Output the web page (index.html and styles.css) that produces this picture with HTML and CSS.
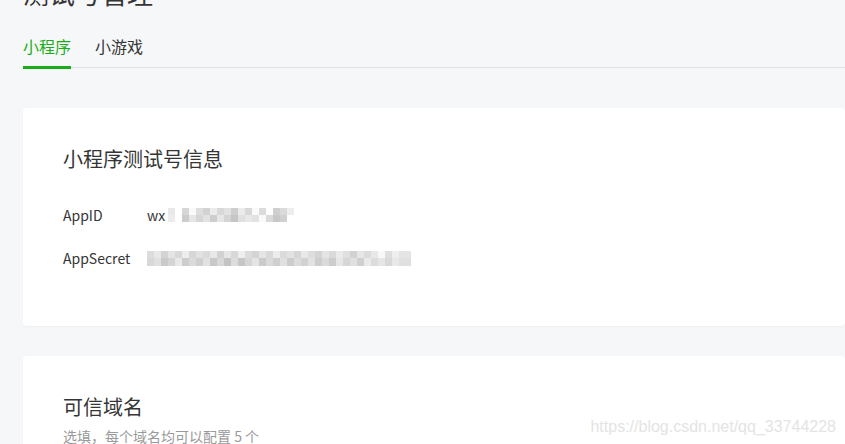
FILE: index.html
```html
<!DOCTYPE html>
<html lang="zh-CN">
<head>
  <meta charset="UTF-8" />
  <meta name="viewport" content="width=device-width, initial-scale=1.0" />
  <title>测试号管理</title>
  <link rel="stylesheet" href="styles.css">
</head>
<body>
  <div class="page">
    <h2 class="page-title">测试号管理</h2>

    <div class="tabs">
      <span class="tab active">小程序</span>
      <span class="tab">小游戏</span>
    </div>

    <div class="card">
      <h3 class="card-title">小程序测试号信息</h3>
      <div class="info-row">
        <span class="info-label">AppID</span>
        <span class="info-value">wx<span class="mosaic mosaic-id"></span></span>
      </div>
      <div class="info-row">
        <span class="info-label">AppSecret</span>
        <span class="info-value"><span class="mosaic mosaic-secret"></span></span>
      </div>
    </div>

    <div class="card card-domain">
      <h3 class="card-title">可信域名</h3>
      <p class="card-desc">选填，每个域名均可以配置 5 个</p>
    </div>
  </div>

  <div class="watermark">https://blog.csdn.net/qq_33744228</div>
</body>
</html>
```

FILE: styles.css
```css
* {
  margin: 0;
  padding: 0;
  box-sizing: border-box;
}

body {
  font-family: "Noto Sans CJK SC", "Noto Sans", sans-serif;
  background: #f6f7f9;
  color: #353535;
  height: 444px;
  overflow: hidden;
  position: relative;
}

.page {
  padding-left: 23px;
}

/* ─── header ─────────────────────────── */
.page-title {
  font-size: 26px;
  font-weight: 400;
  line-height: 36px;
  margin-top: -25px;
  color: #353535;
}

.tabs {
  display: flex;
  gap: 24px;
  margin-top: 19px;
  border-bottom: 1px solid #e1e2e4;
}

.tab {
  font-size: 16px;
  line-height: 24px;
  padding: 4px 0 8px;
  color: #353535;
  border-bottom: 3px solid transparent;
  margin-bottom: -2px;
}

.tab.active {
  color: #1aad19;
  border-bottom-color: #1aad19;
}

/* ─── cards ──────────────────────────── */
.card {
  background: #fff;
  border-radius: 4px;
  box-shadow: 0 1px 2px rgba(0,0,0,0.04);
  margin-top: 40px;
  padding: 37px 40px 0;
  height: 218px;
}

.card-domain {
  margin-top: 30px;
}

.card-title {
  font-size: 20px;
  font-weight: 400;
  line-height: 28px;
  color: #353535;
}

.info-row {
  display: flex;
  align-items: center;
  font-size: 14px;
  line-height: 22px;
  margin-top: 31px;
}

.info-row + .info-row {
  margin-top: 21px;
}

.info-label {
  width: 84px;
  color: #353535;
}

.info-value {
  display: flex;
  align-items: center;
  color: #353535;
}

/* blurred values, two rows of grey cells */
.mosaic {
  display: inline-block;
  height: 14px;
  background-repeat: no-repeat;
  background-size: 100% 7px;
  background-position: 0 0, 0 7px;
}

.mosaic-id {
  width: 132px;
  margin-left: 3px;
  background-image:
    linear-gradient(90deg, #e8e8e8 0 7px, #fff 7px 14px, #d6d6d6 14px 21px, #fafafa 21px 28px, #dedede 28px 35px, #d2d2d2 35px 42px, #ececec 42px 49px, #d8d8d8 49px 56px, #e2e2e2 56px 63px, #cecece 63px 70px, #ebebeb 70px 77px, #d8d8d8 77px 84px, #fafafa 84px 91px, #dcdcdc 91px 98px, #fff 98px 105px, #cfcfcf 105px 112px, #dadada 112px 119px, #eeeeee 119px 126px, #fff 126px 132px),
    linear-gradient(90deg, #ececec 0 7px, #fff 7px 14px, #cccccc 14px 21px, #e6e6e6 21px 28px, #d6d6d6 28px 35px, #e2e2e2 35px 42px, #cdcdcd 42px 49px, #e6e6e6 49px 56px, #d4d4d4 56px 63px, #c6c6c6 63px 70px, #e0e0e0 70px 77px, #e8e8e8 77px 84px, #e2e2e2 84px 91px, #fafafa 91px 98px, #dadada 98px 105px, #c8c8c8 105px 112px, #d0d0d0 112px 119px, #fff 119px 132px);
}

.mosaic-secret {
  width: 264px;
  height: 15px;
  background-size: 100% 7px, 100% 8px;
  background-image:
    linear-gradient(90deg, #dcdcdc 0 7px, #e8e8e8 7px 14px, #d4d4d4 14px 21px, #e4e4e4 21px 28px, #d8d8d8 28px 35px, #ececec 35px 42px, #d6d6d6 42px 49px, #e2e2e2 49px 56px, #dadada 56px 63px, #e8e8e8 63px 70px, #d2d2d2 70px 77px, #e6e6e6 77px 84px, #d8d8d8 84px 91px, #eeeeee 91px 98px, #dcdcdc 98px 105px, #d4d4d4 105px 112px, #e4e4e4 112px 119px, #d9d9d9 119px 126px, #ececec 126px 133px, #dbdbdb 133px 140px, #e2e2e2 140px 147px, #d6d6d6 147px 154px, #e8e8e8 154px 161px, #dddddd 161px 168px, #d4d4d4 168px 175px, #e4e4e4 175px 182px, #dadada 182px 189px, #eaeaea 189px 196px, #e0e0e0 196px 203px, #d2d2d2 203px 210px, #e6e6e6 210px 217px, #dcdcdc 217px 224px, #e8e8e8 224px 231px, #f8f8f8 231px 238px, #dedede 238px 245px, #eeeeee 245px 252px, #e4e4e4 252px 264px),
    linear-gradient(90deg, #d8d8d8 0 7px, #e0e0e0 7px 14px, #cacaca 14px 21px, #d4d4d4 21px 28px, #e8e8e8 28px 35px, #cdcdcd 35px 42px, #dadada 42px 49px, #cfcfcf 49px 56px, #e2e2e2 56px 63px, #c8c8c8 63px 70px, #d8d8d8 70px 77px, #c4c4c4 77px 84px, #dcdcdc 84px 91px, #c6c6c6 91px 98px, #d6d6d6 98px 105px, #e4e4e4 105px 112px, #cacaca 112px 119px, #dadada 119px 126px, #cfcfcf 126px 133px, #e0e0e0 133px 140px, #cccccc 140px 147px, #dcdcdc 147px 154px, #d2d2d2 154px 161px, #e2e2e2 161px 168px, #cecece 168px 175px, #dadada 175px 182px, #cdcdcd 182px 189px, #e6e6e6 189px 196px, #d6d6d6 196px 203px, #e0e0e0 203px 210px, #d0d0d0 210px 217px, #eaeaea 217px 224px, #dcdcdc 224px 231px, #e6e6e6 231px 238px, #d8d8d8 238px 245px, #e8e8e8 245px 252px, #e0e0e0 252px 264px);
}

.card-desc {
  font-size: 14px;
  line-height: 22px;
  color: #9a9a9a;
  margin-top: 4px;
}

/* csdn watermark over the screenshot */
.watermark {
  position: absolute;
  right: 9px;
  top: 418px;
  font-family: "Liberation Sans", Arial, sans-serif;
  font-size: 16px;
  color: #e4e4e4;
}
```
